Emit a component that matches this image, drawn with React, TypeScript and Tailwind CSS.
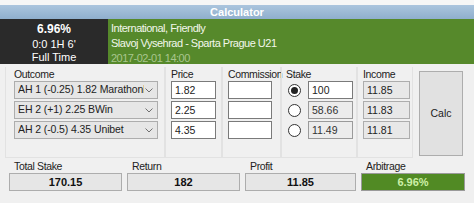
import React from 'react';

const font = { fontFamily: '"Liberation Sans", Arial, sans-serif' };

const rows = [
  { outcome: 'AH 1 (-0.25) 1.82 Marathonbet', price: '1.82', stake: '100', income: '11.85', checked: true },
  { outcome: 'EH 2 (+1) 2.25 BWin', price: '2.25', stake: '58.66', income: '11.83', checked: false },
  { outcome: 'AH 2 (-0.5) 4.35 Unibet', price: '4.35', stake: '11.49', income: '11.81', checked: false },
];

function Chevron() {
  return (
    <svg width="8" height="5" viewBox="0 0 8 5" className="shrink-0">
      <path d="M0.5 0.5 L4 4 L7.5 0.5" fill="none" stroke="#707070" strokeWidth="1" />
    </svg>
  );
}

function Radio({ checked }: { checked: boolean }) {
  return (
    <div className="w-[13px] h-[13px] rounded-full border border-[#333] bg-white flex items-center justify-center">
      {checked && <div className="w-[7px] h-[7px] rounded-full bg-[#222]" />}
    </div>
  );
}

function Group({ label, className, children }: { label: string; className: string; children: React.ReactNode }) {
  return (
    <div className={`border border-[#e2e2e2] border-t-0 ${className}`}>
      <div className="h-[14px] text-[10.5px] tracking-[-0.35px] leading-[14px] text-[#222]">{label}</div>
      <div className="flex flex-col gap-[2px]">{children}</div>
    </div>
  );
}

function Summary({ label, value, green }: { label: string; value: string; green?: boolean }) {
  return (
    <div className="flex flex-col">
      <div className="h-[13px] pl-[5px] text-[10.5px] tracking-[-0.35px] leading-[13px] text-[#222]">{label}</div>
      <div
        className={`h-[18px] border text-[11px] leading-[16px] font-bold text-center ${
          green ? 'bg-[#518a24] border-[#9a9a9a] text-[#cdf0a8]' : 'bg-[#e6e6e6] border-[#adadad] text-[#111]'
        }`}
      >
        {value}
      </div>
    </div>
  );
}

export default function App() {
  return (
    <div className="w-[474px] h-[203px] bg-[#f0f0f0] overflow-hidden" style={font}>
      <div className="h-[5px] bg-[#f6f6f6]" />
      <div className="h-[14px] bg-gradient-to-b from-[#abc5de] to-[#8fafcd] text-white font-bold text-center text-[11px] leading-[14px]">
        Calculator
      </div>
      <div className="flex h-[45px]">
        <div className="w-[108px] bg-[#2a2a2a] text-white flex flex-col items-center pt-[3px]">
          <div className="text-[12px] font-bold leading-[15px]">6.96%</div>
          <div className="text-[11px] leading-[14px]">0:0 1H 6'</div>
          <div className="text-[11px] leading-[13px]">Full Time</div>
        </div>
        <div className="flex-1 bg-[#56892b] pl-[3px] pt-[2px] flex flex-col text-[11px] tracking-[-0.5px] leading-[15px]">
          <div className="text-[#f2f7ec]">International, Friendly</div>
          <div className="text-[#f2f7ec]">Slavoj Vysehrad - Sparta Prague U21</div>
          <div className="text-[#a9c68e]">2017-02-01 14:00</div>
        </div>
      </div>

      <div className="flex pl-[5px] pt-[3px] h-[94px]">
        <Group label="Outcome" className="w-[160px] pl-[8px]">
          {rows.map((r) => (
            <div
              key={r.outcome}
              className="w-[144px] h-[18px] bg-[#e6e6e6] border border-[#adadad] flex items-center pl-[3px] pr-[4px] gap-[1px]"
            >
              <span className="flex-1 overflow-hidden whitespace-nowrap text-[10.5px] tracking-[-0.1px] text-[#222]">
                {r.outcome}
              </span>
              <Chevron />
            </div>
          ))}
        </Group>
        <Group label="Price" className="w-[57px] pl-[5px]">
          {rows.map((r) => (
            <div key={r.price} className="w-[45px] h-[18px] bg-white border border-[#7a7a7a] pl-[3px] text-[10.5px] leading-[16px] text-[#222]">
              {r.price}
            </div>
          ))}
        </Group>
        <Group label="Commission" className="w-[59px] pl-[5px]">
          {rows.map((r) => (
            <div key={r.price} className="w-[44px] h-[18px] bg-white border border-[#7a7a7a]" />
          ))}
        </Group>
        <Group label="Stake" className="w-[76px] pl-[4px]">
          {rows.map((r) => (
            <div key={r.stake} className="flex items-center h-[18px]">
              <div className="w-[22px] pl-[2px]">
                <Radio checked={r.checked} />
              </div>
              <div
                className={`w-[45px] h-[18px] border pl-[3px] text-[10.5px] leading-[16px] ${
                  r.checked ? 'bg-white border-[#7a7a7a] text-[#222]' : 'bg-[#ececec] border-[#9a9a9a] text-[#333]'
                }`}
              >
                {r.stake}
              </div>
            </div>
          ))}
        </Group>
        <Group label="Income" className="w-[56px] pl-[5px]">
          {rows.map((r) => (
            <div key={r.income} className="w-[47px] h-[18px] bg-[#e8e8e8] border border-[#adadad] pl-[3px] text-[10.5px] leading-[16px] text-[#222]">
              {r.income}
            </div>
          ))}
        </Group>
        <div className="pl-[6px] pt-[4px]">
          <div className="w-[44px] h-[85px] bg-[#e1e1e1] border border-[#adadad] flex items-center justify-center text-[10.5px] text-[#222]">
            Calc
          </div>
        </div>
      </div>

      <div className="grid grid-cols-[113px_113px_111px_104px] gap-x-[5px] pl-[9px] pt-[2px]">
        <Summary label="Total Stake" value="170.15" />
        <Summary label="Return" value="182" />
        <Summary label="Profit" value="11.85" />
        <Summary label="Arbitrage" value="6.96%" green />
      </div>
    </div>
  );
}
